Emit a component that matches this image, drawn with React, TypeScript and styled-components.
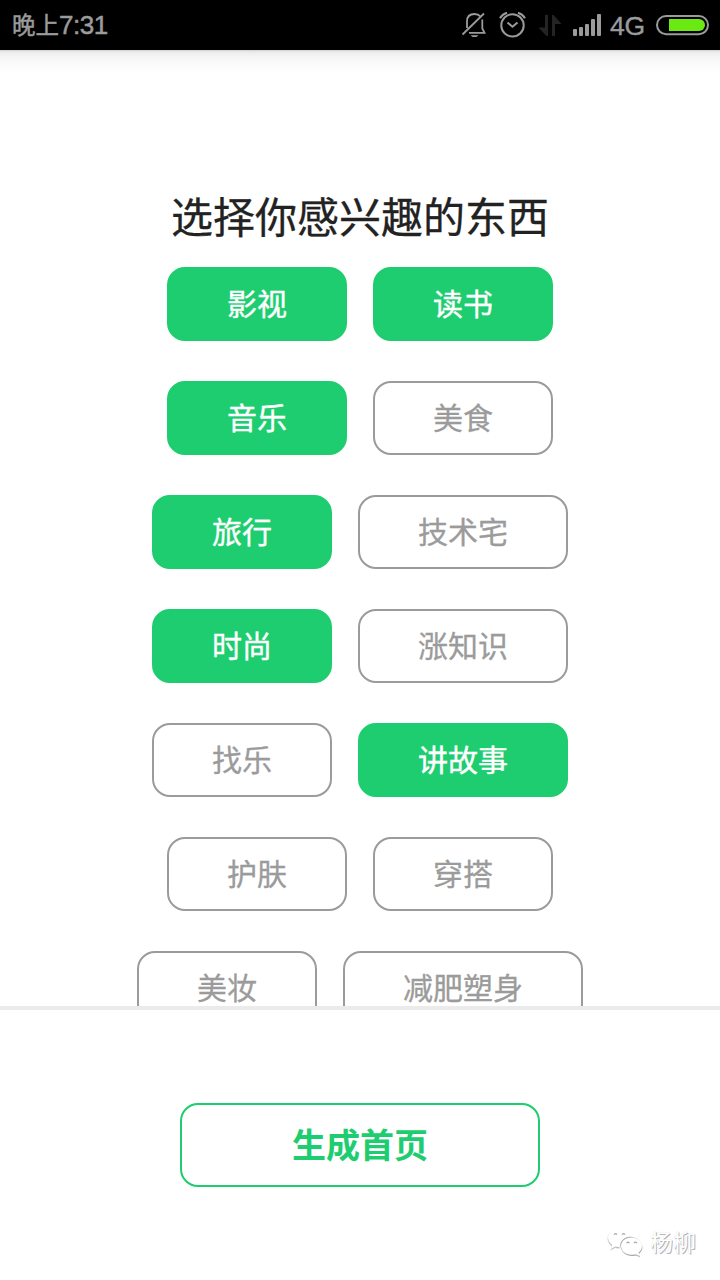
import React from "react";
import styled, { createGlobalStyle } from "styled-components";

const GREEN = "#1dcd6f";
const GREY = "#9b9b9b";

const GlobalStyle = createGlobalStyle`
  * { box-sizing: border-box; }
  body {
    margin: 0;
    background: #fff;
    font-family: "Liberation Sans", "Noto Sans CJK SC", sans-serif;
  }
`;

const Screen = styled.div`
  width: 720px;
  height: 1280px;
  display: flex;
  flex-direction: column;
  overflow: hidden;
  background: #fff;
`;

const StatusBar = styled.header`
  height: 50px;
  flex: none;
  display: flex;
  justify-content: space-between;
  padding-left: 12px;
  background: #000;
  color: ${GREY};
`;

const Clock = styled.div`
  display: flex;
  align-items: baseline;
  height: 50px;
  line-height: 50px;
  font-size: 26px;
  letter-spacing: -0.5px;
  -webkit-text-stroke: 0.5px ${GREY};
`;

const DayPart = styled.span`
  font-family: "Noto Sans CJK SC", sans-serif;
  font-size: 23.5px;
  line-height: 48px;
  letter-spacing: 0;
`;

const StatusIcons = styled.div`
  display: flex;
  height: 50px;
`;

const Network = styled.span`
  width: 48px;
  font-size: 26.5px;
  line-height: 52px;
  letter-spacing: -0.3px;
  -webkit-text-stroke: 0.4px ${GREY};
`;

const TopicPane = styled.main`
  height: 956px;
  flex: none;
  overflow: hidden;
  padding-top: 135px;
  background: linear-gradient(#cfcfcf 0, #ececec 2px, #f5f5f5 7px, #fbfbfb 14px, #fff 24px);
`;

const Title = styled.h1`
  margin: 0 0 22px;
  height: 60px;
  line-height: 60px;
  text-align: center;
  font-family: "Noto Sans CJK SC", sans-serif;
  font-weight: 400;
  font-size: 42px;
  color: #222;
  -webkit-text-stroke: 0.3px #222;
`;

const Rows = styled.div`
  display: flex;
  flex-direction: column;
  gap: 40px;
`;

const Row = styled.div`
  display: flex;
  justify-content: center;
  gap: 26px;
`;

const Chip = styled.button<{ $on?: boolean }>`
  flex: none;
  height: 74px;
  margin: 0;
  padding: 0 58px 4px;
  border: 2px solid ${(p) => (p.$on ? GREEN : GREY)};
  border-radius: 18px;
  background: ${(p) => (p.$on ? GREEN : "#fff")};
  color: ${(p) => (p.$on ? "#fff" : GREY)};
  font-family: "Noto Sans CJK SC", sans-serif;
  font-size: 30px;
  line-height: 66px;
  -webkit-text-stroke: ${(p) => (p.$on ? "0.4px #fff" : `0.3px ${GREY}`)};
`;

const Footer = styled.footer`
  flex: 1;
  display: flex;
  flex-direction: column;
  align-items: center;
  border-top: 4px solid #ebebeb;
  padding-top: 93px;
`;

const Generate = styled.button`
  width: 360px;
  height: 84px;
  flex: none;
  padding: 0 0 2px;
  border: 2px solid ${GREEN};
  border-radius: 18px;
  background: #fff;
  color: ${GREEN};
  font-family: "Noto Sans CJK SC", sans-serif;
  font-weight: 700;
  font-size: 34px;
  line-height: 78px;
`;

const Signature = styled.div`
  display: flex;
  align-items: center;
  align-self: flex-end;
  gap: 7px;
  margin: 37px 24px 0 0;
  height: 36px;
`;

const SignatureName = styled.span`
  height: 36px;
  color: #fff;
  font-family: "Noto Sans CJK SC", sans-serif;
  font-size: 23px;
  line-height: 34px;
  text-shadow: 1px 1px 0 #b4b4b4, 0 0 1px #d8d8d8;
`;

const rows: [string, boolean][][] = [
  [["影视", true], ["读书", true]],
  [["音乐", true], ["美食", false]],
  [["旅行", true], ["技术宅", false]],
  [["时尚", true], ["涨知识", false]],
  [["找乐", false], ["讲故事", true]],
  [["护肤", false], ["穿搭", false]],
  [["美妆", false], ["减肥塑身", false]],
];

const BellOff = () => (
  <svg width="36" height="50" viewBox="456 0 36 50" fill="none" stroke={GREY} strokeWidth="1.8">
    <path d="M467 28V21.5C467 16.5 470 14 474.5 14C477 14 479 14.8 480.3 16.3M482.3 19.5V28.5L484.5 32.8H469" />
    <path d="M462.5 34.5L484 13.5" />
    <path d="M470.5 35.2H478.5L476.5 36.9H472.5Z" fill={GREY} stroke="none" />
  </svg>
);

const Alarm = () => (
  <svg width="42" height="50" viewBox="492 0 42 50" fill="none" stroke={GREY} strokeWidth="2">
    <circle cx="512.5" cy="25.4" r="11.2" />
    <path d="M507.5 22.5L512.5 26.8L517.5 22.5" />
    <path d="M500 18.3Q502.2 14.2 507 12.7M518 12.7Q522.8 14.2 525 18.3" />
  </svg>
);

const DataArrows = () => (
  <svg width="36" height="50" viewBox="534 0 36 50" fill="#242424">
    <path d="M545 15H548V36H546.5L538.5 27.5H545Z" />
    <path d="M552 36H555V24H561.5L553.5 15H552Z" />
  </svg>
);

const Signal = () => (
  <svg width="40" height="50" viewBox="570 0 40 50" fill={GREY}>
    {[29, 27, 24, 19, 14].map((top, i) => (
      <rect key={top} x={573 + i * 6} y={top} width="4" height={36 - top} rx="1" />
    ))}
  </svg>
);

const Battery = () => (
  <svg width="62" height="50" viewBox="658 0 62 50" overflow="visible">
    <rect x="657" y="16" width="51" height="18.2" rx="9.1" fill="none" stroke={GREY} strokeWidth="2" />
    <path d="M669 19H699A6 6 0 0 1 699 31H669Z" fill="#6be913" />
  </svg>
);

const backBubble =
  "M12.5 1C5.8 1 1 5.3 1 10.6C1 13.7 2.6 16.4 5.2 18.1L4 22L8.6 19.6C9.8 20 11.3 20.2 12.8 20.2C12.8 14 17.3 9.4 24.5 9.4C23.5 4.4 18.7 1 12.5 1Z";
const frontBubble =
  "M24.4 10.5C18.5 10.5 14 14.3 14 19.1C14 24 18.5 27.8 24.4 27.8C25.9 27.8 27.3 27.6 28.5 27.2L32.5 29L31.5 25.7C33.6 24.1 35 21.8 35 19.1C35 14.3 30.3 10.5 24.4 10.5Z";

const WeChat = () => (
  <svg width="36" height="30" viewBox="0 0 36 30" overflow="visible">
    <path d={backBubble} fill="#a8a8a8" stroke="#e2e2e2" strokeWidth="0.8" transform="translate(-0.2 1.1)" />
    <path d={backBubble} fill="#fff" />
    <path d={frontBubble} fill="#a8a8a8" transform="translate(-0.7 -0.6)" />
    <path d={frontBubble} fill="#a8a8a8" transform="translate(0.4 1.2)" />
    <path d={frontBubble} fill="#fff" />
    <path
      d="M7 7.7Q8.5 5.5 10 7.7M15 7.7Q16.5 5.5 18 7.7M19.5 16.2Q21 14 22.5 16.2M27 16.2Q28.5 14 30 16.2"
      fill="none"
      stroke="#aaa"
      strokeWidth="1.1"
    />
  </svg>
);

export default function App() {
  return (
    <Screen>
      <GlobalStyle />
      <StatusBar>
        <Clock>
          <DayPart>晚上</DayPart>7:31
        </Clock>
        <StatusIcons>
          <BellOff />
          <Alarm />
          <DataArrows />
          <Signal />
          <Network>4G</Network>
          <Battery />
        </StatusIcons>
      </StatusBar>
      <TopicPane>
        <Title>选择你感兴趣的东西</Title>
        <Rows>
          {rows.map((row) => (
            <Row key={row[0][0]}>
              {row.map(([label, on]) => (
                <Chip key={label} $on={on}>
                  {label}
                </Chip>
              ))}
            </Row>
          ))}
        </Rows>
      </TopicPane>
      <Footer>
        <Generate>生成首页</Generate>
        <Signature>
          <WeChat />
          <SignatureName>杨柳</SignatureName>
        </Signature>
      </Footer>
    </Screen>
  );
}
